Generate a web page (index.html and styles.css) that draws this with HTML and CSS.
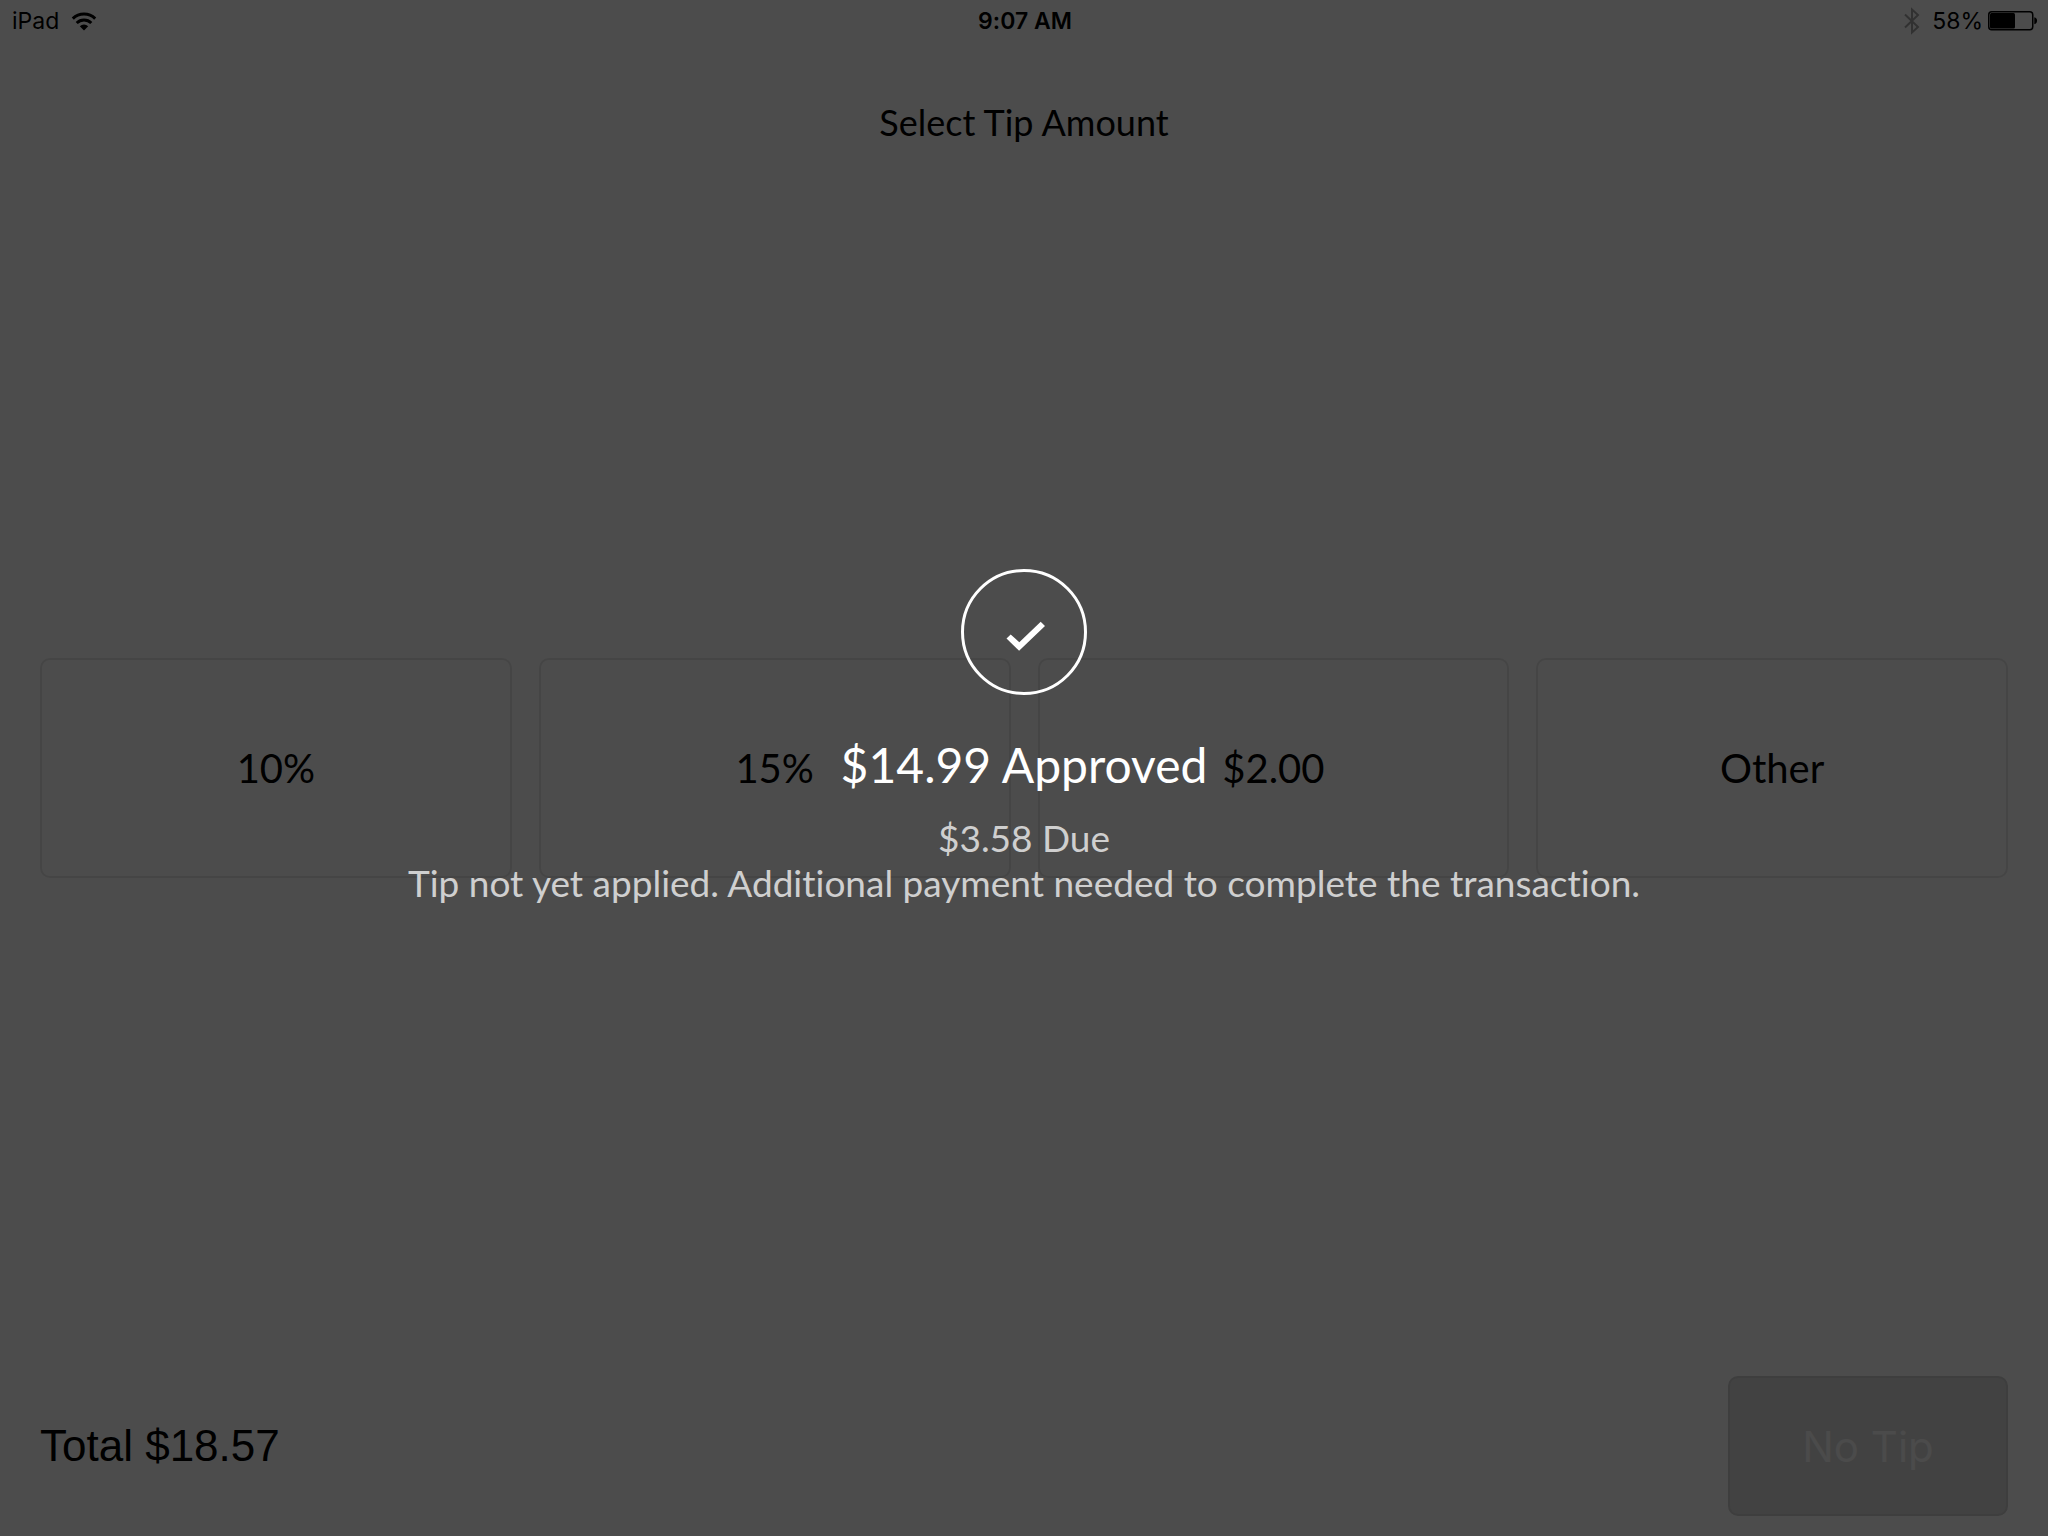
FILE: index.html
```html
<!DOCTYPE html>
<html lang="en">
<head>
    <meta charset="UTF-8">
    <meta name="viewport" content="width=device-width, initial-scale=1.0">
    <title>Select Tip Amount</title>
    <link rel="stylesheet" href="styles.css">
</head>
<body>
    <div class="screen">
        <header class="top">
            <div class="status-bar">
                <div class="status-left">
                    <span>iPad</span>
                    <svg class="wifi" width="26" height="20" viewBox="0 0 26 20" aria-hidden="true">
                        <path d="M13 19.5 L8.8 15.2 A6 6 0 0 1 17.2 15.2 Z" fill="#000"/>
                        <path d="M5.7 12 A10.4 10.4 0 0 1 20.3 12" fill="none" stroke="#000" stroke-width="3"/>
                        <path d="M1.8 7.6 A16 16 0 0 1 24.2 7.6" fill="none" stroke="#000" stroke-width="3"/>
                    </svg>
                </div>
                <div class="clock">9:07 AM</div>
                <div class="status-right">
                    <svg class="bluetooth" width="16" height="28" viewBox="0 0 16 28" aria-hidden="true">
                        <path d="M1 7.5 L14 20 L8 25.5 V2.5 L14 8 L1 20.5" fill="none" stroke="#a4a4a4" stroke-width="2"/>
                    </svg>
                    <span>58%</span>
                    <svg class="battery" width="50" height="20" viewBox="0 0 50 20" aria-hidden="true">
                        <rect x="0.75" y="0.75" width="44" height="18" rx="3" fill="none" stroke="#000" stroke-width="1.5"/>
                        <rect x="2" y="2" width="25" height="15.5" rx="1.5" fill="#000"/>
                        <path d="M46.3 6.3 C50 7 50 12.5 46.3 13.2 Z" fill="#000"/>
                    </svg>
                </div>
            </div>
            <h1>Select Tip Amount</h1>
        </header>

        <main class="tips">
            <button class="tip">10%</button>
            <button class="tip">15%</button>
            <button class="tip">$2.00</button>
            <button class="tip">Other</button>
        </main>

        <footer class="bottom">
            <div class="total">Total $18.57</div>
            <button class="no-tip">No Tip</button>
        </footer>
    </div>

    <div class="overlay" role="status">
        <svg class="check" width="126" height="126" viewBox="0 0 126 126" aria-hidden="true">
            <circle cx="63" cy="63" r="61.5" fill="none" stroke="#fff" stroke-width="3"/>
            <path d="M45.5 69.5 L49.7 65.4 L58.3 73.2 L79.7 52.8 L84 57 L58.1 81.8 Z" fill="#fff"/>
        </svg>
        <p class="approved">$14.99 Approved</p>
        <p class="detail">$3.58 Due</p>
        <p class="detail">Tip not yet applied. Additional payment needed to complete the transaction.</p>
    </div>
</body>
</html>
```
FILE: styles.css
```css
* {
    box-sizing: border-box;
}
body {
    margin: 0;
    background-color: #fff;
    color: #000;
    font-family: Lato, sans-serif;
    font-variant-ligatures: none;
}
button {
    font-family: inherit;
    color: inherit;
    cursor: pointer;
}
.screen {
    display: grid;
    grid-template-rows: 1fr auto 1fr;
    min-height: 100vh;
}

/* status bar */
.status-bar {
    display: grid;
    grid-template-columns: 1fr auto 1fr;
    align-items: center;
    height: 42px;
    padding: 0 10px 0 12px;
    font-family: Inter, sans-serif;
    font-size: 23px;
}
.status-left,
.status-right {
    display: flex;
    align-items: center;
}
.status-left {
    gap: 12px;
}
.status-right {
    justify-content: flex-end;
    gap: 5px;
}
.bluetooth {
    margin-right: 7px;
}
.clock {
    font-weight: 600;
}
h1 {
    margin: 58px 0 0;
    font-size: 36px;
    font-weight: 400;
    line-height: 44px;
    text-align: center;
}

/* tip choices */
.tips {
    display: grid;
    grid-template-columns: repeat(4, 1fr);
    gap: 27px;
    padding: 0 40px;
}
.tip {
    height: 220px;
    border: 2px solid #e8e8e8;
    border-radius: 10px;
    background-color: transparent;
    font-size: 40px;
}

.bottom {
    display: flex;
    align-items: flex-end;
    justify-content: space-between;
    padding: 0 40px 20px;
}
.total {
    font-family: "Liberation Sans", sans-serif;
    font-size: 44px;
    line-height: 140px;
}
.no-tip {
    width: 280px;
    height: 140px;
    border: 2px solid #cfcfcf;
    border-radius: 10px;
    background-color: #dcdcdc;
    color: #fafafa;
    font-family: Inter, sans-serif;
    font-size: 42px;
}

/* payment result on top of the tip screen */
.overlay {
    position: absolute;
    inset: 0;
    display: flex;
    flex-direction: column;
    align-items: center;
    justify-content: center;
    padding-bottom: 62px;
    background-color: rgba(0, 0, 0, 0.7);
    text-align: center;
}
.overlay p {
    margin: 0;
}
.overlay .approved {
    margin: 40px 0 20px;
    color: #fff;
    font-size: 48px;
    line-height: 60px;
}
.detail {
    color: #cfcfcf;
    font-size: 37px;
    line-height: 45px;
}
```
